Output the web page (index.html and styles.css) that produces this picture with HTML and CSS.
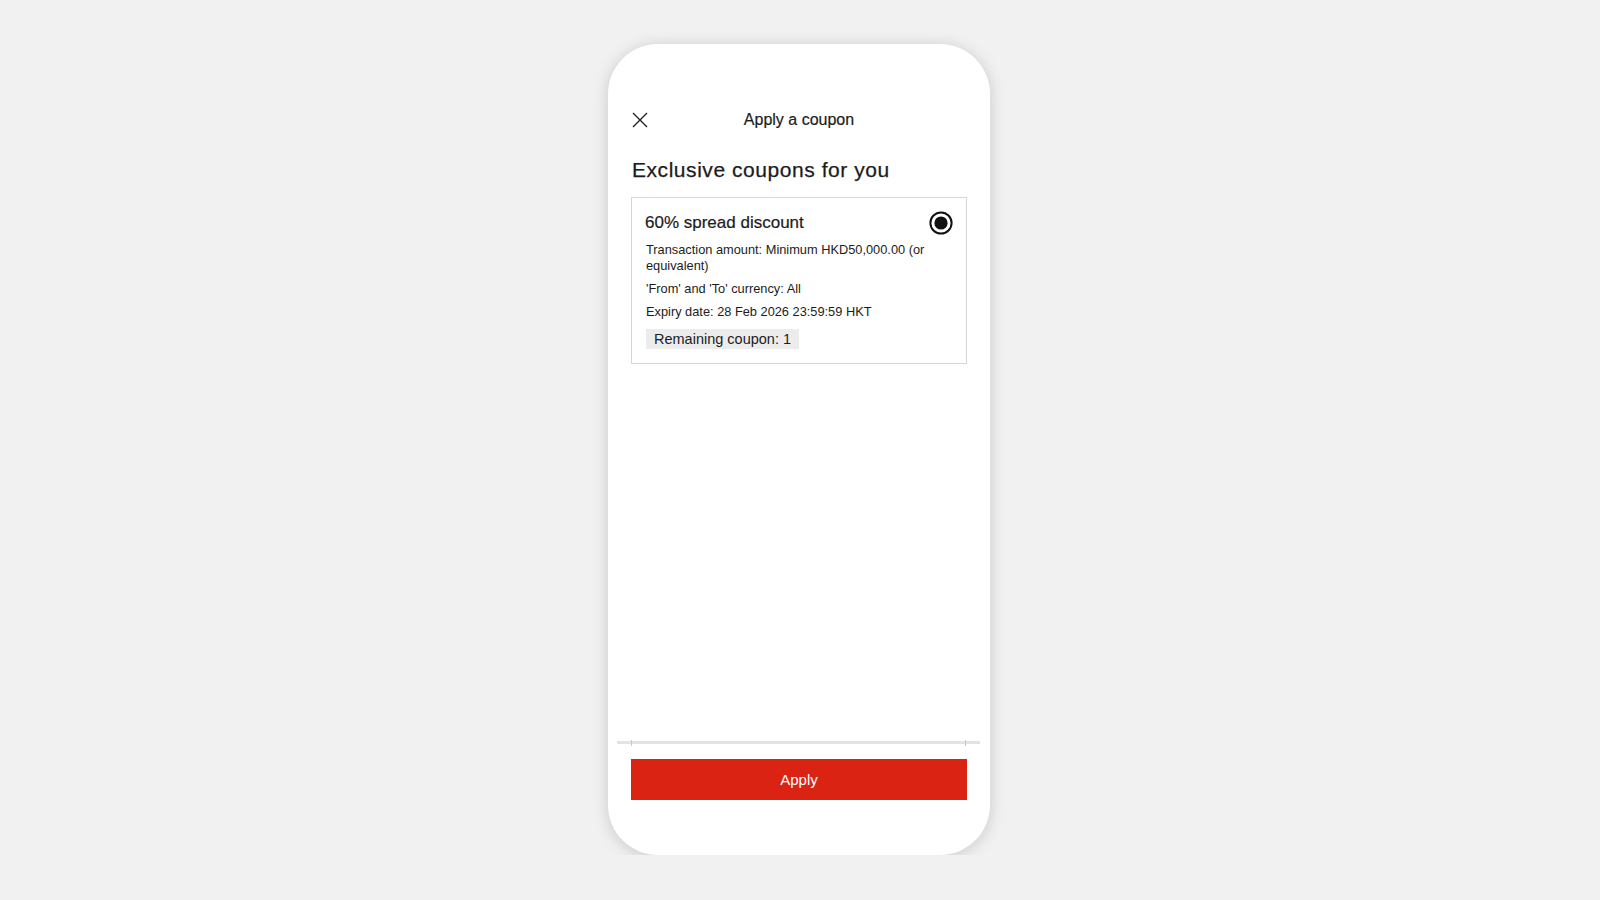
FILE: index.html
```html
<!DOCTYPE html>
<html lang="en">
<head>
    <meta charset="UTF-8">
    <meta name="viewport" content="width=device-width, initial-scale=1.0">
    <title>Apply a coupon</title>
    <link rel="stylesheet" href="styles.css">
</head>
<body>
    <div class="phone">
        <div class="header">
            <button class="close-btn" aria-label="Close">
                <svg width="16" height="16" viewBox="0 0 16 16">
                    <path d="M1 1 L15 15 M15 1 L1 15" stroke="#222" stroke-width="1.4" fill="none"/>
                </svg>
            </button>
            <div class="header-title">Apply a coupon</div>
        </div>

        <div class="content">
            <h1>Exclusive coupons for you</h1>

            <div class="coupon">
                <div class="coupon-top">
                    <div class="coupon-name">60% spread discount</div>
                    <svg class="radio" width="24" height="24" viewBox="0 0 24 24">
                        <circle cx="12" cy="12" r="10.6" stroke="#111" stroke-width="2" fill="none"/>
                        <circle cx="12" cy="12" r="6.6" fill="#111"/>
                    </svg>
                </div>
                <p>Transaction amount: Minimum HKD50,000.00 (or equivalent)</p>
                <p>'From' and 'To' currency: All</p>
                <p>Expiry date: 28 Feb 2026 23:59:59 HKT</p>
                <span class="remaining">Remaining coupon: 1</span>
            </div>
        </div>

        <div class="footer">
            <div class="divider"><span></span></div>
            <div class="actions">
                <button class="apply-btn">Apply</button>
            </div>
        </div>
    </div>
</body>
</html>
```

FILE: styles.css
```css
body {
    font-family: 'Liberation Sans', Arial, sans-serif;
    margin: 0;
    padding-top: 44px;
    background-color: #f1f1f1;
    color: #1c1c1c;
    display: flex;
    justify-content: center;
}
.phone {
    width: 382px;
    height: 811px;
    background-color: #fff;
    border-radius: 50px;
    box-shadow: 0 2px 16px rgba(0, 0, 0, 0.17);
    display: flex;
    flex-direction: column;
    padding-top: 52px;
    box-sizing: border-box;
    margin-left: -2px;
}
.header {
    height: 48px;
    display: flex;
    align-items: center;
    padding: 0 24px 0 24px;
}
.close-btn {
    background: none;
    border: none;
    padding: 0;
    width: 16px;
    height: 16px;
    cursor: pointer;
    display: flex;
}
.header-title {
    flex: 1;
    text-align: center;
    font-size: 16px;
    margin-right: 16px;
    margin-top: -1px;
    -webkit-text-stroke: 0.2px #1c1c1c;
}
.content {
    flex: 1;
    padding: 0 23px 0 23px;
}
h1 {
    font-size: 21px;
    font-weight: normal;
    line-height: 28px;
    margin: 12px 0 13px 1px;
    letter-spacing: 0.55px;
    -webkit-text-stroke: 0.25px #1c1c1c;
}
.coupon {
    border: 1px solid #d6d6d6;
    padding: 13px 13px 14px 13px;
}
.coupon-top {
    display: flex;
    justify-content: space-between;
    align-items: center;
    margin-bottom: 7px;
}
.coupon-name {
    font-size: 17px;
    line-height: 24px;
    -webkit-text-stroke: 0.2px #1c1c1c;
}
.coupon p {
    font-size: 12.8px;
    line-height: 15.5px;
    margin: 0 0 7.5px 1px;
}
.remaining {
    display: inline-block;
    background-color: #ececec;
    font-size: 14.5px;
    line-height: 20px;
    padding: 0 8px;
    margin-left: 1px;
    margin-top: 2px;
}
.divider {
    height: 3px;
    margin: 0 10px 0 9px;
    background-color: #e3e3e3;
    display: flex;
}
.divider span {
    flex: 1;
    margin: -1px 14px 0 14px;
    height: 6px;
    border-left: 1px solid #c9c9c9;
    border-right: 1px solid #c9c9c9;
}
.actions {
    padding: 15px 23px 55px 23px;
}
.apply-btn {
    width: 100%;
    height: 41px;
    border: none;
    background-color: #da2313;
    color: #fff;
    font-family: 'Liberation Sans', Arial, sans-serif;
    font-size: 15px;
    cursor: pointer;
}
```
